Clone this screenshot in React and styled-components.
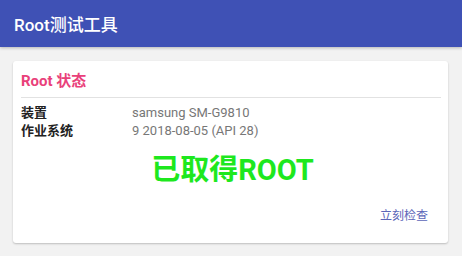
import React from 'react';
import styled, { createGlobalStyle } from 'styled-components';

const Global = createGlobalStyle`
  html, body {
    margin: 0;
    padding: 0;
    background: #f2f2f2;
    font-family: Roboto, "Noto Sans CJK SC", sans-serif;
  }
`;

const Page = styled.div`
  width: 462px;
  height: 256px;
  display: flex;
  flex-direction: column;
  background: #f2f2f2;
  overflow: hidden;
`;

const AppBar = styled.header`
  height: 47px;
  flex: none;
  display: flex;
  align-items: center;
  padding: 0 14px;
  background: #3f51b5;
  color: #fff;
  font-size: 17px;
  font-weight: 500;
  box-shadow: 0 1px 3px rgba(0, 0, 0, 0.25);
`;

const Content = styled.main`
  padding: 14px 14px 0 13px;
`;

const Card = styled.section`
  height: 182px;
  background: #fff;
  border-radius: 3px;
  box-shadow: 0 1px 2px rgba(0, 0, 0, 0.22);
  padding: 0 7px 0 8px;
  display: flex;
  flex-direction: column;
`;

const CardTitle = styled.h2`
  margin: 0;
  height: 35px;
  display: flex;
  align-items: center;
  padding-top: 1px;
  border-bottom: 1px solid #e2e2e2;
  color: #e9407a;
  font-size: 15px;
  font-weight: 700;
`;

const InfoGrid = styled.div`
  display: grid;
  grid-template-columns: 111px 1fr;
  row-gap: 2px;
  margin-top: 7px;
  font-size: 13px;
  line-height: 16px;
`;

const Label = styled.span`
  color: #222;
  font-weight: 700;
`;

const Value = styled.span`
  color: #777;
`;

const Status = styled.div`
  margin-top: 13px;
  text-align: center;
  color: #1ee81e;
  font-size: 29px;
  font-weight: 700;
  line-height: 36px;
  padding-left: 3px;
`;

const Actions = styled.div`
  display: flex;
  justify-content: flex-end;
  margin-top: 18px;
  padding-right: 13px;
`;

const LinkButton = styled.button`
  border: 0;
  background: none;
  padding: 0;
  color: #5c66b8;
  font-family: inherit;
  font-size: 12px;
`;

export default function App() {
  return (
    <Page>
      <Global />
      <AppBar>Root测试工具</AppBar>
      <Content>
        <Card>
          <CardTitle>Root 状态</CardTitle>
          <InfoGrid>
            <Label>装置</Label>
            <Value>samsung SM-G9810</Value>
            <Label>作业系统</Label>
            <Value>9 2018-08-05 (API 28)</Value>
          </InfoGrid>
          <Status>已取得ROOT</Status>
          <Actions>
            <LinkButton>立刻检查</LinkButton>
          </Actions>
        </Card>
      </Content>
    </Page>
  );
}
